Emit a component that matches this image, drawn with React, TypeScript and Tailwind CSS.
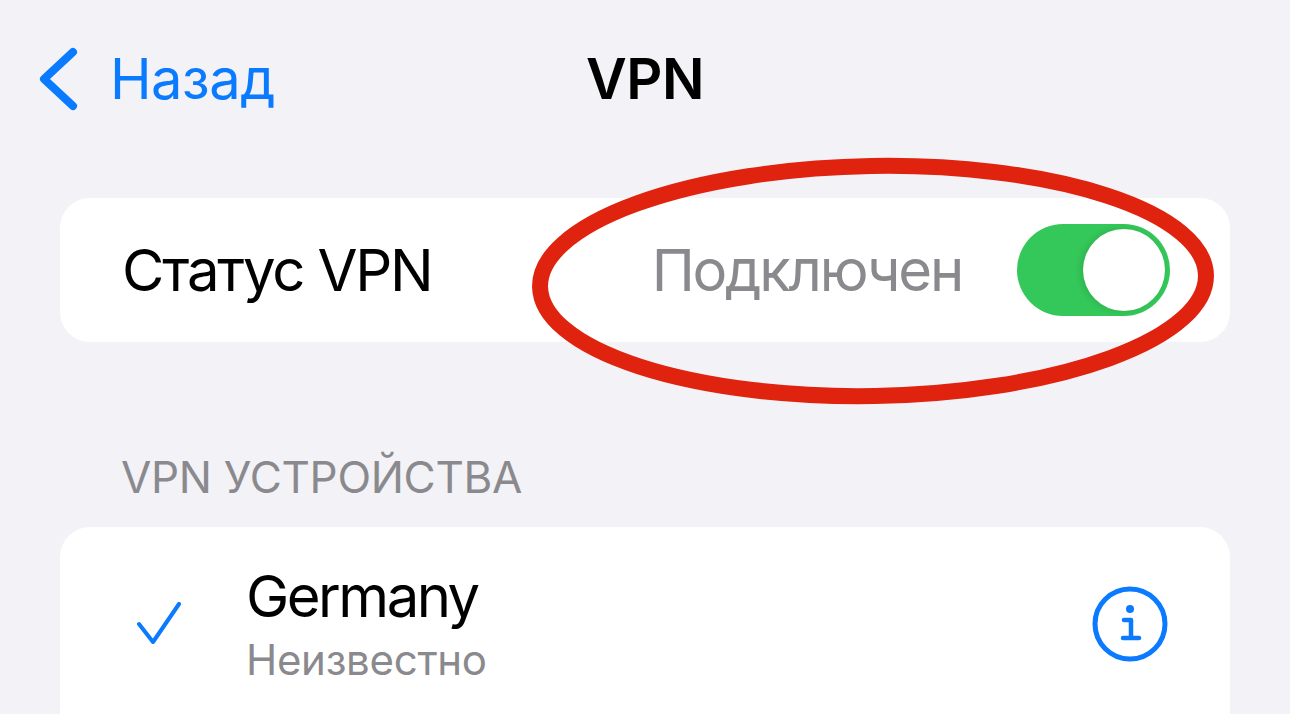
import React from "react";

const font = { fontFamily: "Inter, 'Noto Sans', sans-serif" };

export default function App() {
  return (
    <div
      className="relative w-[1290px] h-[714px] overflow-hidden bg-[#f2f2f7] text-black"
      style={font}
    >
      {/* Nav bar */}
      <div className="grid grid-cols-[1fr_auto_1fr] items-center h-[158px]">
        <div className="flex items-center pl-[36px] gap-[30px] text-[#0a7aff]">
          <svg width="44" height="66" viewBox="0 0 44 66" fill="none">
            <path
              d="M37 6 L8 33 L37 60"
              stroke="#0a7aff"
              strokeWidth="8"
              strokeLinecap="round"
              strokeLinejoin="round"
            />
          </svg>
          <span className="text-[56px] leading-none tracking-[-0.5px]">Назад</span>
        </div>
        <div className="text-[56px] leading-none font-semibold tracking-[-0.5px]">VPN</div>
        <div />
      </div>

      {/* Status card */}
      <div className="mx-[60px] mt-[40px] h-[144px] rounded-[30px] bg-white flex items-center pl-[62px] pr-[60px]">
        <span className="text-[58px] leading-none tracking-[-2.2px]">Статус VPN</span>
        <span className="ml-auto text-[58px] leading-none text-[#8a8a8e] tracking-[-2.2px]">
          Подключен
        </span>
        <div className="ml-[55px] w-[153px] h-[92px] rounded-full bg-[#34c759] flex items-center justify-end pr-[5px]">
          <div className="w-[82px] h-[82px] rounded-full bg-white shadow-[-2px_0_6px_rgba(0,0,0,0.12)]" />
        </div>
      </div>

      {/* Section header */}
      <div className="h-[185px] flex items-center pl-[121px] pt-[84px]">
        <span className="text-[44px] leading-none text-[#8a8a8e] tracking-[-0.3px]">
          VPN УСТРОЙСТВА
        </span>
      </div>

      {/* Devices card */}
      <div className="mx-[60px] h-[260px] rounded-t-[30px] bg-white pt-[40px]">
        <div className="flex items-center pr-[60px]">
          <div className="w-[186px] pl-[77px] flex items-center">
            <svg width="44" height="44" viewBox="0 0 44 44" fill="none">
              <path
                d="M2 22 L16 40 L42 2"
                stroke="#0a7aff"
                strokeWidth="4"
                strokeLinecap="round"
                strokeLinejoin="round"
              />
            </svg>
          </div>
          <div className="flex flex-col">
            <span className="text-[58px] leading-none tracking-[-2.5px]">Germany</span>
            <span className="mt-[14px] text-[42px] leading-none text-[#8a8a8e] tracking-[-0.3px]">
              Неизвестно
            </span>
          </div>
          <svg className="ml-auto" width="80" height="80" viewBox="0 0 80 80" fill="none">
            <circle cx="40" cy="40" r="35" stroke="#0a7aff" strokeWidth="5" />
            <circle cx="40" cy="25" r="4" fill="#0a7aff" />
            <path
              d="M34 36 H41 V54 M33 54 H49"
              stroke="#0a7aff"
              strokeWidth="4.5"
              strokeLinecap="round"
              strokeLinejoin="round"
            />
          </svg>
        </div>
      </div>

      {/* Red annotation ellipse */}
      <svg
        className="absolute left-0 top-0 pointer-events-none"
        width="1290"
        height="714"
        viewBox="0 0 1290 714"
        fill="none"
      >
        <ellipse
          cx="873"
          cy="281"
          rx="333"
          ry="115"
          stroke="#e0230e"
          strokeWidth="16"
          transform="rotate(-1 873 281)"
        />
      </svg>
    </div>
  );
}
